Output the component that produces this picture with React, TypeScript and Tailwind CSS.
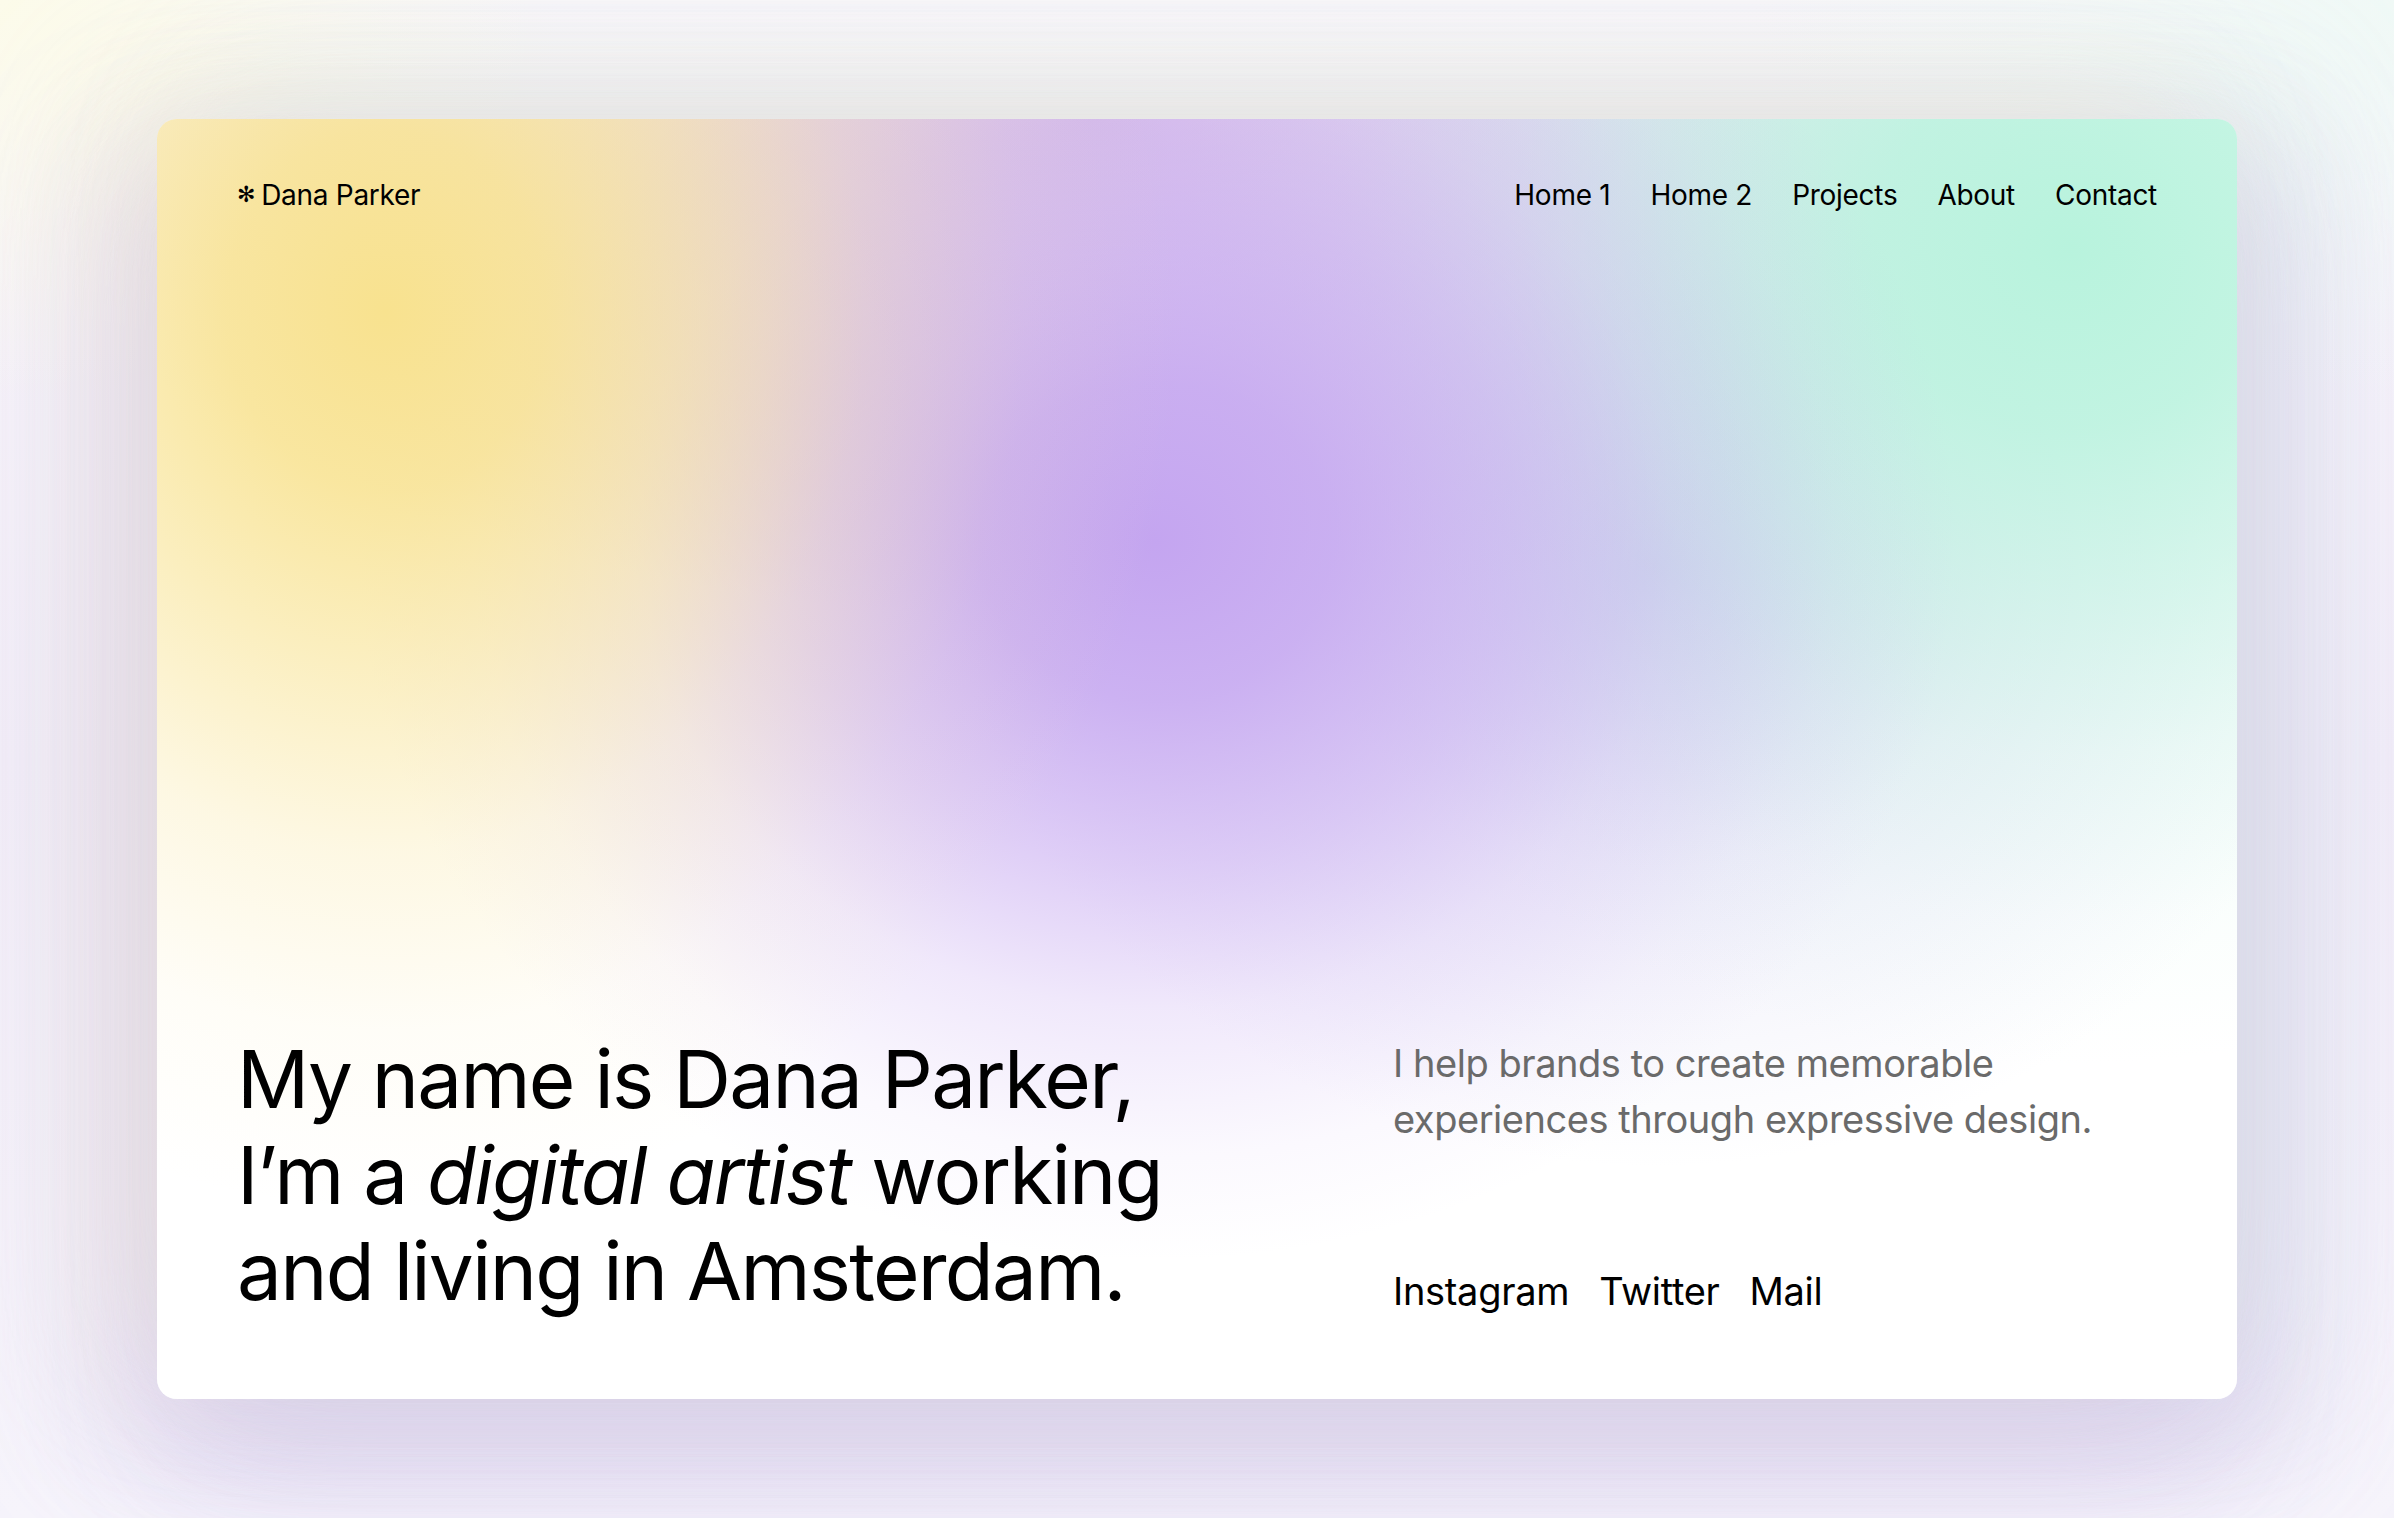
import React from "react";

const navItems = ["Home 1", "Home 2", "Projects", "About", "Contact"];
const socials = ["Instagram", "Twitter", "Mail"];

const App = () => {
  return (
    <div className="min-h-screen w-full flex items-center justify-center font-['Inter','Noto_Sans',sans-serif] text-black bg-[radial-gradient(ellipse_700px_500px_at_0%_0%,#fcfbea_0%,rgba(252,251,234,0)_80%),radial-gradient(ellipse_800px_500px_at_100%_0%,#f0f9f6_0%,rgba(240,249,246,0)_80%),linear-gradient(180deg,#f8f6fb_0%,#f1edf8_50%,#f6f4fb_100%)]">
      {/* Card */}
      <div className="w-[2080px] h-[1280px] rounded-[20px] flex flex-col justify-between px-20 pt-[55px] pb-20 shadow-[-50px_-30px_150px_rgba(248,238,190,0.3),50px_-30px_150px_rgba(205,240,230,0.3),0_50px_140px_rgba(200,182,232,0.45),-50px_40px_140px_rgba(212,198,238,0.4),50px_40px_140px_rgba(208,198,236,0.4)] bg-[radial-gradient(ellipse_800px_900px_at_11%_15%,rgba(248,226,143,1)_0%,rgba(248,226,143,0.85)_20%,rgba(248,226,143,0.55)_40%,rgba(248,226,143,0.25)_60%,rgba(248,226,143,0.07)_80%,rgba(248,226,143,0)_100%),radial-gradient(ellipse_800px_720px_at_48%_33%,rgba(196,165,240,1)_0%,rgba(196,165,240,0.85)_22%,rgba(196,165,240,0.55)_45%,rgba(196,165,240,0.25)_65%,rgba(196,165,240,0.07)_85%,rgba(196,165,240,0)_100%),radial-gradient(ellipse_900px_820px_at_92%_10%,rgba(184,243,221,1)_0%,rgba(184,243,221,0.85)_22%,rgba(184,243,221,0.55)_42%,rgba(184,243,221,0.25)_62%,rgba(184,243,221,0.07)_82%,rgba(184,243,221,0)_100%),radial-gradient(ellipse_1100px_500px_at_45%_0%,rgba(215,190,232,0.9)_0%,rgba(215,190,232,0.4)_50%,rgba(215,190,232,0)_100%),radial-gradient(ellipse_700px_600px_at_72%_35%,rgba(205,205,238,0.8)_0%,rgba(205,205,238,0.3)_50%,rgba(205,205,238,0)_100%),linear-gradient(180deg,#ffffff_0%,#ffffff_100%)]">
        {/* Header */}
        <header className="flex items-center justify-between text-[28px] leading-[42px] tracking-[-0.01em]">
          <div className="flex items-center gap-[6px]">
            <span className="text-[22px] font-['DejaVu_Sans',sans-serif] leading-none">✻</span>
            <span>Dana Parker</span>
          </div>
          <nav className="flex items-center gap-10">
            {navItems.map((item) => (
              <a key={item} href="#" className="text-black">
                {item}
              </a>
            ))}
          </nav>
        </header>

        {/* Hero */}
        <div className="flex items-stretch justify-between">
          <h1 className="text-[80px] leading-[96px] font-normal tracking-[-0.022em]">
            My name is Dana Parker,
            <br />
            I’m a <em className="italic">digital artist</em> working
            <br />
            and living in Amsterdam.
          </h1>
          <div className="w-[764px] flex flex-col justify-between">
            <p className="text-[38px] leading-[56px] text-[#6a6a6a] tracking-[-0.012em] pt-1">
              I help brands to create memorable
              <br />
              experiences through expressive design.
            </p>
            <div className="flex items-center gap-[30px] text-[38px] leading-[56px] tracking-[-0.008em]">
              {socials.map((s) => (
                <a key={s} href="#">
                  {s}
                </a>
              ))}
            </div>
          </div>
        </div>
      </div>
    </div>
  );
};

export default App;
